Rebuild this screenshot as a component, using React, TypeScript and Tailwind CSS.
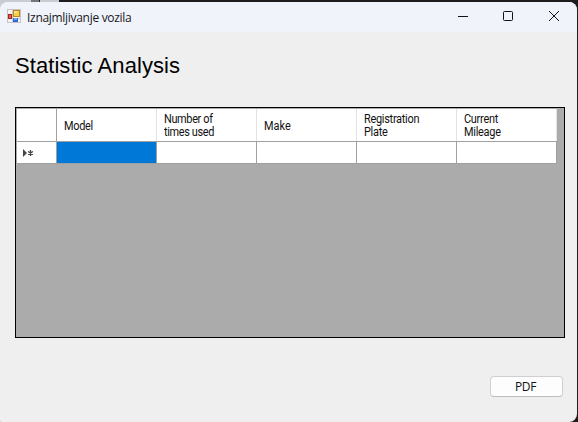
import type { ReactNode } from 'react';

type Column = { lines: string[]; className: string };

const columns: Column[] = [
  { lines: ['Model'], className: 'tracking-[-0.3px]' },
  { lines: ['Number of', 'times used'], className: 'tracking-[-0.38px]' },
  { lines: ['Make'], className: 'tracking-[0px]' },
  { lines: ['Registration', 'Plate'], className: 'tracking-[-0.3px]' },
  { lines: ['Current', 'Mileage'], className: 'tracking-[-0.28px]' },
];

function AppIcon() {
  return (
    <svg width="14" height="14" viewBox="0 0 14 14" shapeRendering="crispEdges">
      <rect x="0.5" y="0.5" width="13" height="13" fill="#f4f4f6" stroke="#c3c3c7" />
      <path d="M5.5 0v14M0 9.5h14" stroke="#c9c9cd" />
      <rect x="1" y="5" width="4" height="5" fill="#a3261c" />
      <rect x="2" y="6" width="2" height="3" fill="#e85b48" />
      <rect x="6" y="1" width="7" height="7" fill="#b9861b" />
      <rect x="7" y="2" width="5" height="5" fill="#f9cf4b" />
      <rect x="7" y="2" width="3" height="2" fill="#ffe38a" />
      <rect x="6" y="9" width="5" height="4" fill="#2f68d0" />
      <rect x="7" y="9" width="3" height="2" fill="#72a8f4" />
    </svg>
  );
}

function TitleButton({ label, children }: { label: string; children: ReactNode }) {
  return (
    <button aria-label={label} className="flex h-[30px] w-[46px] items-center justify-center">
      <svg width="12" height="12" viewBox="0 0 12 12" fill="none" stroke="#111318">
        {children}
      </svg>
    </button>
  );
}

function TitleBar() {
  return (
    <header className="flex h-[30px] items-start bg-[#f1f3fa] pl-[7px]">
      <div className="pt-[7px]">
        <AppIcon />
      </div>
      <h1 className="mt-2 ml-[6px] whitespace-nowrap font-['Open_Sans',sans-serif] text-[12px] leading-4 tracking-[-0.3px] text-[#17181c]">
        Iznajmljivanje vozila
      </h1>
      <div className="ml-auto flex">
        <TitleButton label="Minimize">
          <path d="M2 5.5h10" />
        </TitleButton>
        <TitleButton label="Maximize">
          <rect x="1.5" y="0.5" width="9" height="9" rx="1" />
        </TitleButton>
        <TitleButton label="Close">
          <path d="M1 0l10 10M11 0L1 10" />
        </TitleButton>
      </div>
    </header>
  );
}

function DataGrid() {
  return (
    <div className="mt-[29px] ml-[15px] h-[231px] w-[550px] border border-black bg-[#ababab] pt-px pl-px">
      <div className="flex h-[33px] w-[540px] border-b border-[#a0a0a0] bg-white">
        <div className="w-10 border-r border-[#a0a0a0]" />
        {columns.map((column) => (
          <div
            key={column.lines[0]}
            className="flex w-[100px] flex-col justify-center border-r border-[#e3e3e3] pt-[2px] pl-[7px]"
          >
            {column.lines.map((line) => (
              <span
                key={line}
                className={`h-[13px] origin-left scale-x-[0.91] whitespace-nowrap font-['Roboto',sans-serif] text-[12px] leading-[13px] text-[#111] ${column.className}`}
              >
                {line}
              </span>
            ))}
          </div>
        ))}
      </div>
      <div className="flex h-[22px] w-[540px] border-b border-[#a0a0a0] bg-white">
        <div className="flex w-10 items-center border-r border-[#a0a0a0] pt-px pl-[6px]">
          <svg width="12" height="8" viewBox="0 0 12 8" fill="#444">
            <path d="M0 0l4 4-4 4z" />
            <path d="M7.5 1v6M5 2.5l5 3M10 2.5l-5 3" stroke="#444" strokeWidth="1.3" />
          </svg>
        </div>
        <div className="w-[100px] border-r border-[#a0a0a0] bg-[#0078d7]" />
        {columns.slice(1).map((column) => (
          <div key={column.lines[0]} className="w-[100px] border-r border-[#a0a0a0]" />
        ))}
      </div>
    </div>
  );
}

export default function App() {
  return (
    <div className="h-[422px] w-[578px] overflow-hidden bg-[linear-gradient(90deg,#c9ccd2_0_31px,#777_31px_39px,#222_39px_40px,#c9ccd2_40px_59px,#1d1b1c_59px)] pt-[2px] pr-px">
      <div className="flex h-[420px] flex-col overflow-hidden rounded-[8px] rounded-bl-[2px] bg-[#efefef]">
        <TitleBar />
        <h2 className="mt-[21px] ml-[15px] h-[25px] whitespace-nowrap font-['Liberation_Sans',sans-serif] text-[22px] leading-[25px] tracking-[0.07px] text-black">
          Statistic Analysis
        </h2>
        <DataGrid />
        <button className="mt-[38px] ml-[490px] h-[21px] w-[73px] rounded-[4px] border border-[#d0d0d0] border-b-[#bcbcbc] bg-[#fdfdfd] pr-[2px] font-['Open_Sans',sans-serif] text-[12px] leading-[19px] tracking-[-0.4px] text-[#111]">
          PDF
        </button>
      </div>
    </div>
  );
}
